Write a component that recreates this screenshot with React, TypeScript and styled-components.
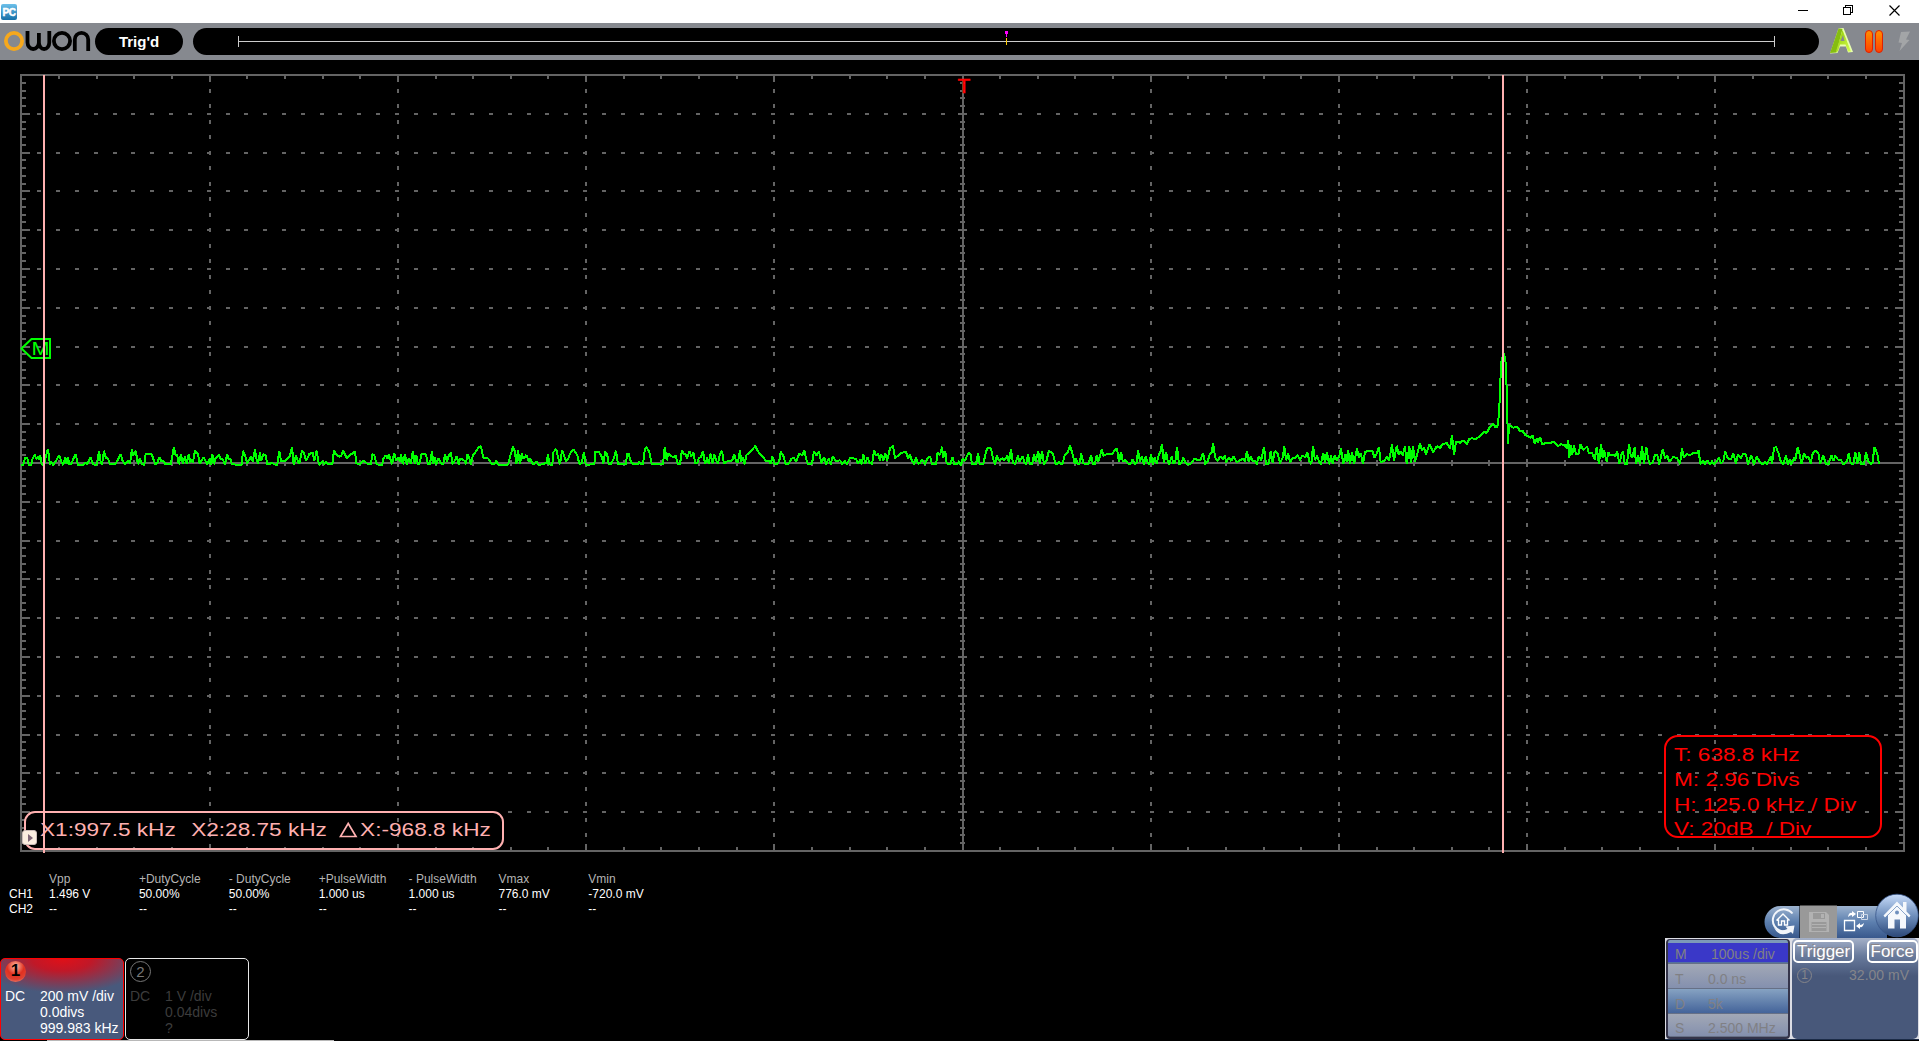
import React from "react";
import styled, { createGlobalStyle } from "styled-components";

const GlobalStyle = createGlobalStyle`
  * { box-sizing: border-box; }
  body {
    margin: 0;
    background: #000;
    font-family: "Liberation Sans", Arial, sans-serif;
    overflow: hidden;
  }
`;

// plot frame, as the centres of its 2px border lines
const LEFT = 21;
const TOP = 75;
const WIDTH = 1883;
const HEIGHT = 776;
const COLS = 10;
const ROWS = 20;
const FLOOR = 465;
const GRID = "#646464";
const CURSOR = "#ffb0b0";

// spectrum samples: start of the chunk in px, then "x,level" pairs in thirds of a px
const spectrum: [number, string][] = [
  [
    0,
    "63,0 70,0 75,22 82,20 86,0 94,0 98,20 105,33 108,18 114,26 117,16 120,31 125,2 132,0 137,25 144,48 150,0 154,10 160,0 168,12 178,30 184,10 190,0 196,22 200,5 204,24 208,2 214,2 220,18 227,32 234,0 250,0 257,8 262,2 271,24 280,2 291,0 297,42 302,8 306,2 312,43 318,20 324,20 330,2 346,2 354,16 362,32 368,12 376,2 384,12 390,4 396,48 400,28 407,43 414,2 419,20 426,3 433,0 437,33 455,33 460,18 466,2 472,5 478,24 484,12 491,12 496,2 512,2 517,28 522,54 527,28 531,32 536,2 543,32 548,5 555,26 560,3 566,33 571,8 575,18 579,8 585,43 594,33 599,4 604,12 611,24 617,10 622,2 629,20 632,0 637,34 641,2 646,18 657,32 662,18 668,18 675,0 681,33 686,18 691,18 696,2 725,0 729,43 735,30 741,5 748,15 753,26 758,10 765,48 769,20 774,4 780,38 784,12 790,32 797,30 802,2 810,4 817,6 822,2 832,0 838,43 843,12 854,12 864,22 870,28 876,54 881,0 888,30 893,12 898,3 906,43 912,35 918,12 924,24 928,33 938,38 943,12 950,43 957,0 963,5 968,12 973,2 978,10 984,2 997,2 1002,43 1008,33 1018,25 1024,28 1030,43 1040,20 1050,30 1065,40 1069,5 1078,2 1088,12 1096,10 1103,2 1113,2 1117,32 1123,30 1130,2 1146,0 1150,18 1157,30 1163,18 1166,32 1170,22 1176,2 1182,36 1189,14 1194,24 1199,10 1203,33 1208,2 1215,32 1220,2 1226,20 1232,4 1239,43 1244,4 1249,30 1254,2 1257,2 1260,10 1264,32 1278,32 1284,2 1290,3 1296,43 1300,2 1305,24 1308,0 1315,20 1323,5 1330,2 1335,32 1341,10 1347,30 1353,38 1357,3 1362,8 1370,26 1376,2 1381,20 1395,12 1398,2 1402,32 1407,25 1413,0 1418,28 1425,36 1436,54",
  ],
  [
    480,
    "3,57 10,22 24,20 36,2 43,2 49,14 54,1 84,1 90,25 99,55 105,40 109,2 114,44 120,2 125,34 130,18 139,30 147,10 151,20 158,2 164,5 170,10 176,1 190,2 196,8 200,5 204,34 208,2 217,0 220,38 229,48 236,14 240,2 246,44 252,30 258,10 264,18 272,38 281,46 292,30 298,3 305,5 312,40 317,1 343,2 346,40 356,40 364,28 370,5 376,40 382,30 386,2 392,3 402,20 408,43 414,3 430,4 438,2 441,34 446,34 453,8 460,2 474,3 478,10 483,2 489,2 494,44 499,54 508,40 515,2 540,2 549,2 554,55 560,14 565,34 575,26 581,22 587,30 593,3 600,3 606,44 612,34 617,32 621,20 629,42 634,25 640,38 646,5 652,5 656,20 663,24 669,42 675,4 682,22 686,2 691,34 698,5 703,32 710,10 714,3 720,34 726,42 732,4 738,10 748,12 757,14 763,32 769,10 774,8 780,44 784,10 788,22 794,2 799,30 810,38 826,57 838,34 848,25 858,12 868,12 872,3 877,25 884,2 892,4 898,12 902,40 910,28 917,3 925,2 934,18 941,22 948,10 958,34 967,30 973,44 978,20 984,2 996,4 1002,42 1010,28 1017,42 1024,5 1032,24 1039,2 1046,20 1052,2 1058,25 1068,12 1080,14 1086,3 1094,12 1101,2 1110,22 1118,20 1128,18 1134,3 1140,16 1145,2 1150,32 1156,5 1163,24 1168,8 1176,2 1182,44 1188,28 1194,34 1200,14 1204,32 1210,14 1216,36 1222,14 1230,50 1239,58 1245,20 1254,28 1264,36 1278,40 1284,20 1290,32 1296,12 1303,2 1308,24 1314,3 1319,5 1326,18 1334,2 1342,18 1350,26 1356,2 1368,2 1373,38 1380,30 1386,55 1390,22 1396,42 1400,5 1406,2 1411,2 1418,24 1423,2 1432,4 1438,12",
  ],
  [
    940,
    "60,2 64,0 68,20 76,12 80,25 86,36 92,30 96,2 108,2 114,36 119,2 130,2 138,40 142,50 153,50 159,20 165,2 170,28 178,12 186,20 193,15 202,28 207,8 213,48 219,5 226,3 234,28 238,10 248,26 254,5 258,2 264,32 270,2 276,2 282,32 287,10 295,42 299,3 306,42 312,2 320,14 326,42 338,36 346,5 352,2 358,10 363,2 368,4 374,30 384,40 390,58 397,36 404,5 408,20 413,2 418,2 424,34 430,5 438,3 446,4 453,30 459,3 465,3 470,30 475,10 480,28 486,48 490,28 500,32 510,34 516,32 522,42 531,50 537,8 543,40 548,12 556,14 566,2 572,3 578,18 584,2 590,8 594,44 600,10 605,26 612,2 617,26 622,10 628,2 633,32 638,2 644,22 650,5 656,30 662,42 666,64 672,5 678,40 684,8 688,2 695,26 700,5 706,10 711,54 717,2 724,6 730,22 736,8 745,1 754,5 764,20 774,14 782,16 789,36 796,2 803,12 810,34 816,38 819,66 826,22 834,12 840,26 848,18 854,28 859,8 866,22 874,12 880,26 890,8 900,14 910,20 914,10 921,42 926,10 932,26 938,10 944,14 950,2 956,26 964,14 972,54 978,3 986,3 992,42 998,5 1004,42 1014,32 1020,5 1028,22 1033,58 1038,14 1044,36 1050,8 1058,22 1066,20 1073,30 1080,14 1086,28 1096,24 1102,38 1108,12 1114,3 1119,58 1125,14 1131,28 1137,10 1142,2 1150,36 1155,5 1161,40 1167,2 1173,28 1178,3 1184,30 1190,14 1198,26 1203,50 1210,2 1216,32 1220,10 1224,46 1230,3 1236,40 1242,2 1251,50 1257,22 1262,36 1269,2 1275,38 1282,42 1298,42 1303,22 1310,34 1317,54 1322,8 1334,14 1341,26 1347,12 1356,62 1362,12 1370,58 1376,30 1382,42 1388,28 1395,56 1400,2 1408,56 1413,5 1419,58 1425,10 1432,34 1440,64 1446,44 1452,54 1458,32 1468,62 1480,38 1490,56 1498,54",
  ],
  [
    1400,
    "120,50 126,62 140,66 150,50 156,90 162,30 168,70 176,70 180,66 190,74 200,62 208,78 216,80 228,78 236,84 252,100 260,96 268,112 280,124 286,114 292,114 297,150 300,220 303,300 306,320 312,336 318,300 320,220 324,64 327,120 332,118 340,112 352,114 360,102 368,102 376,90 384,86 392,82 398,88 404,64 410,80 414,68 420,84 427,62 438,66 450,66 462,70 474,56 482,62 494,60 500,50 505,74 508,22 512,60 516,30 522,58 528,32 536,34 541,62 549,46 556,50 561,56 566,36 576,36 584,16 590,54 597,2 603,64 608,20 612,44 620,10 625,38 632,28 640,32 646,26 652,40 658,2 664,30 669,40 674,4 681,2 687,62 692,30 697,22 704,54 708,2 714,30 720,2 726,56 732,4 739,54 745,16 750,2 758,8 765,30 772,30 778,2 788,48 795,20 802,28 808,10 820,24 832,20 840,2 846,50 852,22 860,32 870,30 880,36 890,36 896,44 901,2 910,12 914,2 922,14 930,2 936,12 942,2 950,12 957,22 963,4 970,12 976,42 982,22 992,16 1000,34 1008,4 1014,32 1022,20 1030,34 1038,32 1044,2 1054,30 1062,2 1070,26 1080,8 1088,2 1094,10 1100,2 1108,16 1112,26 1116,4 1122,50 1128,54 1136,34 1143,8 1150,2 1158,30 1163,2 1170,16 1174,2 1182,22 1186,14 1193,54 1200,26 1205,2 1212,36 1218,22 1226,24 1232,5 1238,34 1248,44 1256,32 1260,3 1270,28 1278,3 1286,2 1294,30 1300,12 1306,28 1314,16 1322,16 1330,2 1342,14 1346,36 1352,6 1360,2 1366,40 1372,2 1378,38 1383,2 1392,2 1398,38 1405,10 1413,2 1418,8 1423,54 1432,34 1437,2",
  ],
];

const tracePoints = spectrum
  .flatMap(([start, chunk]) =>
    chunk.split(" ").map((pair) => {
      const [x, level] = pair.split(",").map(Number);
      return `${(start + x / 3).toFixed(1)},${(FLOOR - level / 3).toFixed(1)}`;
    })
  )
  .join(" ");

const range = (n: number) => Array.from({ length: n }, (_, i) => i);

// rectangles of the graticule as path commands
const box = (x: number, y: number, w: number, h: number) => `M${x} ${y}h${w}v${h}h${-w}z`;

const gridPath = (() => {
  const right = LEFT + WIDTH;
  const bottom = TOP + HEIGHT;
  const midX = 963;
  const midY = 463;
  const column = (n: number, per: number) => LEFT + 0.5 + (n * (WIDTH - 1)) / (COLS * per);
  let d = "";
  d += box(LEFT - 1, TOP - 1, WIDTH + 2, 2) + box(LEFT - 1, bottom - 1, WIDTH + 2, 2);
  d += box(LEFT - 1, TOP, 2, HEIGHT) + box(right - 1, TOP, 2, HEIGHT);
  d += box(midX - 1, TOP, 2, HEIGHT) + box(LEFT, midY - 1, WIDTH, 2);

  range(COLS * 5 - 1).forEach((i) => {
    const x = Math.round(column(i + 1, 5));
    const major = (i + 1) % 5 === 0;
    d += box(x - 1, TOP, 2, major ? 7 : 4) + box(x - 1, bottom - (major ? 7 : 4), 2, major ? 7 : 4);
    d += box(x - 1, midY - (major ? 4 : 3), 2, major ? 8 : 6);
  });
  range(ROWS * 5 - 1).forEach((i) => {
    const y = Math.round(TOP + ((i + 1) * HEIGHT) / (ROWS * 5));
    const len = (i + 1) % 5 === 0 ? 9 : 5;
    d += box(LEFT, y - 1, len, 2) + box(right - len, y - 1, len, 2);
    d += box(midX - (len === 9 ? 5 : 3), y - 1, len === 9 ? 9 : 5, 2);
  });
  // dotted division lines
  range(ROWS - 1).forEach((r) => {
    if (r === ROWS / 2 - 1) return;
    const y = Math.round(TOP + ((r + 1) * HEIGHT) / ROWS);
    range(COLS * 10 - 1).forEach((i) => {
      const shift = i < 50 ? 1 : 0;
      d += box(Math.round(column(i + 1, 10)) - 2 - shift + (i < 50 ? 0 : 1), y - 1, 4, 2);
    });
  });
  range(COLS - 1).forEach((c) => {
    if (c === COLS / 2 - 1) return;
    const x = Math.round(column(c + 1, 1));
    range(49).forEach((i) => {
      d += box(x - 1, Math.round(TOP + ((i + 1) * HEIGHT) / 50) - 2, 2, 4);
    });
  });
  return d;
})();

const measures = [
  { name: "Vpp", ch1: "1.496 V" },
  { name: "+DutyCycle", ch1: "50.00%" },
  { name: "- DutyCycle", ch1: "50.00%" },
  { name: "+PulseWidth", ch1: "1.000 us" },
  { name: "- PulseWidth", ch1: "1.000 us" },
  { name: "Vmax", ch1: "776.0 mV" },
  { name: "Vmin", ch1: "-720.0 mV" },
];

const timebase = [
  { label: "M", value: "100us /div", kind: "active" },
  { label: "T", value: "0.0 ns", kind: "grey" },
  { label: "D", value: "5k", kind: "blue" },
  { label: "S", value: "2.500 MHz", kind: "grey" },
];

const Logo = () => (
  <svg width="95" height="37" viewBox="0 23 95 37" fill="none" stroke="#000" strokeWidth="3.8">
    <circle cx="14" cy="41" r="8.1" stroke="#f6a81c" strokeWidth="3.8" />
    <path d="M27.5 31v11.500a5.700 6.500 0 0 0 11.400 0V33 M38.900 42.500a5.200 6.500 0 0 0 10.400 0V31" />
    <circle cx="62" cy="41" r="8.100" />
    <path d="M74.800 51V39.500a6.600 6.600 0 0 1 13.400 0V51" />
  </svg>
);

const PlotArea = () => (
  <svg width="1919" height="810" viewBox="0 60 1919 810">
    <path d={gridPath} fill={GRID} shapeRendering="crispEdges" />
    <text x="957.600" y="93" fontSize="21" fill="#f00" stroke="#f00" strokeWidth=".4">T</text>
    <polyline
      points={tracePoints}
      fill="none"
      stroke="#0f0"
      strokeWidth="2"
      strokeLinejoin="bevel"
      shapeRendering="crispEdges"
    />
    <path d="M21.500 348.500L31.500 339H50v19H31.500z" fill="none" stroke="#0f0" strokeWidth="2" />
    <text x="31.500" y="355.300" fontSize="19" fill="#0f0" textLength="18" lengthAdjust="spacingAndGlyphs">M</text>
    <path d={box(43, 75, 2, 778) + box(1502, 75, 2, 778)} fill={CURSOR} shapeRendering="crispEdges" />
  </svg>
);

const App: React.FC = () => {
  return (
    <Window>
      <GlobalStyle />
      <TitleBar>
        <AppIcon>PC</AppIcon>
        <svg width="121" height="23" viewBox="1798 0 121 23" fill="none" stroke="#000" shapeRendering="crispEdges">
          <path d="M1798 10.500h10" />
          <path d="M1843.500 7.500h7v7h-7z M1845.500 7v-1.500h7v7h-2" />
          <path d="M1889.500 5.500l10 10m0-10l-10 10" shapeRendering="auto" strokeWidth="1.200" />
        </svg>
      </TitleBar>
      <StatusBar>
        <Logo />
        <Pill $width={88}>Trig'd</Pill>
        <Pill $width={1626}>
          <svg width="1626" height="27" viewBox="193 28 1626 27" shapeRendering="crispEdges">
            <path d="M238 41h1537v1H238z M238 36h1v11h-1z M1774 36h1v11h-1z" fill="#ccc" />
            <path d="M1005 31h3v3h-1v3h-1v-3h-1z" fill="#f0f" />
            <path d="M1006 38h1v7h-1z" fill="#fc0" />
          </svg>
        </Pill>
        <StatusIcons />
      </StatusBar>
      <Scope>
        <PlotArea />
        <CursorReadout>
          <Stretched>
            <CursorRow>
              <span>X1:997.5 kHz</span>
              <span>X2:28.75 kHz</span>
              <svg width="18" height="20">
                <path d="M1.500 16.500L8 3.500L14.500 16.500z" fill="none" stroke={CURSOR} strokeWidth="1.600" />
              </svg>
              <span>X:-968.8 kHz</span>
            </CursorRow>
          </Stretched>
        </CursorReadout>
        <Expander>
          <svg width="7" height="8"><path d="M1 0l5 4-5 4z" fill="#806878" /></svg>
        </Expander>
        <FftReadout>
          <Stretched>
            <FftLine>T: 638.8 kHz</FftLine>
            <FftLine>M: 2.96 Divs</FftLine>
            <FftLine>H: 125.0 kHz / Div</FftLine>
            <FftLine>V: 20dB{"  "}/ Div</FftLine>
          </Stretched>
        </FftReadout>
      </Scope>
      <Footer>
        <div>
          <Measures>
            <MeasureColumn>
              <span>&nbsp;</span>
              <span>CH1</span>
              <span>CH2</span>
            </MeasureColumn>
            {measures.map(({ name, ch1 }) => (
              <MeasureColumn key={name}>
                <MeasureName>{name}</MeasureName>
                <span>{ch1}</span>
                <span>--</span>
              </MeasureColumn>
            ))}
          </Measures>
          <Channels>
            <Channel $on>
              <Badge $on>1</Badge>
              <span>DC</span>
              <ChannelValues>200 mV /div{"\n"}0.0divs{"\n"}999.983 kHz</ChannelValues>
            </Channel>
            <Channel>
              <Badge>2</Badge>
              <span>DC</span>
              <ChannelValues>1 V /div{"\n"}0.04divs{"\n"}?</ChannelValues>
            </Channel>
          </Channels>
          <TaskLine />
        </div>
        <Controls>
          <Tools />
          <Panels>
            <Timebase>
              {timebase.map(({ label, value, kind }) => (
                <TimeRow key={label} $kind={kind}>
                  <span>{label}</span>
                  <span>{value}</span>
                </TimeRow>
              ))}
            </Timebase>
            <TriggerPanel>
              <TriggerButtons>
                <TriggerButton>Trigger</TriggerButton>
                <TriggerButton>Force</TriggerButton>
              </TriggerButtons>
              <TriggerLevel>
                <Source>1</Source>
                <span>32.00 mV</span>
              </TriggerLevel>
            </TriggerPanel>
          </Panels>
        </Controls>
      </Footer>
    </Window>
  );
};

const StatusIcons = () => (
  <svg width="100" height="37" viewBox="1819 23 100 37">
    <defs>
      <linearGradient id="pause" x1="0" y1="0" x2="0" y2="1">
        <stop offset="0" stopColor="#ff9000" />
        <stop offset="1" stopColor="#ff4000" />
      </linearGradient>
      <linearGradient id="auto" x1="0" y1="0" x2="1" y2="1">
        <stop offset="0" stopColor="#8cc800" />
        <stop offset="1" stopColor="#d8ff50" />
      </linearGradient>
    </defs>
    <path d="M1838.500 28.500l5-.5 9.500 24-5 .5-2-6h-6l-2.500 6.500-7.500.5z" fill="#e8ffb0" />
    <path d="M1838.500 28.500l4 .5-6 23.500-6.500.5z" fill="#86bd10" />
    <path d="M1842.500 30l8.500 21.500h-3l-2.500-7h-5.500l-2 7h-2z" fill="url(#auto)" />
    <path d="M1843 35l1.500 6h-4z" fill="#86898f" />
    <rect x="1865.500" y="30.500" width="7" height="22" rx="3.500" fill="url(#pause)" stroke="#e02000" />
    <rect x="1875.500" y="30.500" width="7" height="22" rx="3.500" fill="url(#pause)" stroke="#e02000" />
    <path d="M1901 32l9-.5-4 8 3.500.5-10 11 2.500-8-3.500-.5z" fill="#a3a5a7" />
  </svg>
);

const Tools = () => (
  <svg width="156" height="46" viewBox="1763 892 156 46">
    <defs>
      <linearGradient id="tool" x1="0" y1="0" x2="0" y2="1">
        <stop offset="0" stopColor="#9db3cf" />
        <stop offset=".5" stopColor="#5d80af" />
        <stop offset="1" stopColor="#38588c" />
      </linearGradient>
      <linearGradient id="home" x1="0" y1="0" x2="0" y2="1">
        <stop offset="0" stopColor="#c8dcfa" />
        <stop offset=".5" stopColor="#7090bd" />
        <stop offset="1" stopColor="#2c4878" />
      </linearGradient>
    </defs>
    <path d="M1799.500 906h-19a16 16 0 0 0 0 32h19z M1837 906h50v32h-50z" fill="url(#tool)" />
    <path d="M1800 905.500h37V938h-37z" fill="#999" />

    {/* back to home: open ring ending in an arrow head */}
    <path d="M1792.500 913.500A11 11 0 1 0 1789 930" fill="none" stroke="#f2f5fa" strokeWidth="2" />
    <path d="M1773 925q4 9 14.500 4l-2-2.500 9-1-1.500 8.500-2-2q-13 7-18-7z" fill="#f2f5fa" />
    <path d="M1776.500 920.500l6.500-6.500 6.500 6.500 M1778.500 919.500v5.500h3v-4h3v4h3v-5.500" fill="none" stroke="#fff" strokeWidth="1.400" />

    {/* save, disabled */}
    <path d="M1809 912h17l3 3v17h-20z" fill="#b2b2b2" />
    <path d="M1813 913h12v6h-12z M1811.500 922h15v9h-15z" fill="#999" />
    <path d="M1821 914h3v4h-3z M1812 924h14v1h-14z M1812 927h14v1h-14z" fill="#b2b2b2" />

    {/* swap windows */}
    <g fill="none" stroke="#fff">
      <path d="M1844.500 920.500h10v10h-10z" strokeWidth="1.300" />
      <path d="M1857.500 911.500h6v6h-6z" />
      <path d="M1861.500 914.500h6v5h-6z" stroke="#cbd6e6" />
    </g>
    <path d="M1848 917q1-5 4-4v-2l4 3-4 3v-2q-2 0-4 2z M1864 923q-1 5-4 4v2l-4-3 4-3v2q2 0 4-2z" fill="#fff" />

    <circle cx="1897" cy="915.500" r="21.300" fill="url(#home)" stroke="#39578a" strokeWidth=".8" />
    <path d="M1883.500 915.500l13.500-14 6 6v-5.500h3.500v9.500l4 4-1.500 2-3-3v14h-6v-9h-5.500v9h-6.500v-14l-3 3z" fill="#f5f8fc" />
    <path d="M1885 916l12-12 12 12" fill="none" stroke="#6f8fbd" strokeWidth=".8" transform="translate(0 2)" />
    <circle cx="1897" cy="912.500" r="2" fill="#6f8fbd" />
  </svg>
);

const Window = styled.div`
  width: 1919px;
  height: 1041px;
  display: flex;
  flex-direction: column;
  background: #000;
  overflow: hidden;

  svg {
    display: block;
    flex: none;
  }
`;

const TitleBar = styled.header`
  height: 23px;
  display: flex;
  justify-content: space-between;
  align-items: center;
  background: #fff;
  flex: none;
`;

const AppIcon = styled.div`
  width: 16px;
  height: 16px;
  margin-left: 1px;
  border-radius: 2px;
  background: linear-gradient(#6cc0ea, #1670a8);
  color: #fff;
  font-size: 10px;
  font-weight: bold;
  line-height: 17px;
  text-align: center;
  letter-spacing: -0.5px;
  -webkit-text-stroke: 0.5px #fff;
`;

const StatusBar = styled.div`
  height: 37px;
  display: flex;
  align-items: center;
  background: #86898f;
  flex: none;
`;

const Pill = styled.div<{ $width: number }>`
  width: ${(p) => p.$width}px;
  height: 27px;
  margin-right: ${(p) => (p.$width < 100 ? 10 : 0)}px;
  display: flex;
  align-items: center;
  justify-content: center;
  border-radius: 14px;
  background: #000;
  color: #fff;
  font-size: 15px;
  font-weight: bold;
  flex: none;
`;

const Scope = styled.main`
  position: relative;
  height: 810px;
  flex: none;
`;

const Stretched = styled.div`
  transform: scaleX(1.19);
  transform-origin: 0 0;
  font-size: 19px;
  white-space: pre;
`;

const CursorReadout = styled.div`
  position: absolute;
  left: 24px;
  top: 751px;
  width: 480px;
  height: 39px;
  padding: 7px 0 0 14px;
  border: 2px solid ${CURSOR};
  border-radius: 11px;
  color: ${CURSOR};
`;

const CursorRow = styled.div`
  display: grid;
  grid-template-columns: 127px 124px 18px auto;
  justify-content: start;
  line-height: 20px;
`;

const Expander = styled.button`
  position: absolute;
  left: 22px;
  top: 770px;
  width: 15px;
  height: 15px;
  padding: 0 0 0 2px;
  display: grid;
  place-items: center;
  border: 1px solid #cbbcb8;
  border-radius: 3px;
  background: #fbeee0;
`;

const FftReadout = styled.div`
  position: absolute;
  left: 1664px;
  top: 675px;
  width: 218px;
  height: 103px;
  padding: 7px 0 0 8px;
  border: 2px solid #f00;
  border-radius: 14px;
  color: #f00;
`;

const FftLine = styled.div`
  height: 25px;
  line-height: 22px;

  &:last-child {
    margin-top: -1px;
  }
`;

const Footer = styled.footer`
  display: flex;
  justify-content: space-between;
  align-items: flex-end;
  height: 171px;
`;

const Measures = styled.div`
  display: grid;
  grid-template-columns: 40px repeat(7, 89.900px);
  padding-left: 9px;
  margin-bottom: 41px;
`;

const MeasureColumn = styled.div`
  display: flex;
  flex-direction: column;
  color: #fff;
  font-size: 12px;
  line-height: 15px;
  white-space: nowrap;
`;

const MeasureName = styled.span`
  color: #b4b4b4;
`;

const Channels = styled.div`
  display: flex;
  gap: 1px;
`;

const Channel = styled.section<{ $on?: boolean }>`
  width: 124px;
  height: 82px;
  padding: 2px 0 0 4px;
  display: grid;
  grid-template-columns: 35px 1fr;
  grid-template-rows: 27px 1fr;
  border: 1px solid ${(p) => (p.$on ? "#f00" : "#e8e8e8")};
  border-radius: 5px;
  background: ${(p) =>
    p.$on ? "radial-gradient(ellipse 85px 34px at 50% 0, #e01018 0, #c01828 35%, #48597c 100%) #48597c" : "#000"};
  color: ${(p) => (p.$on ? "#fff" : "#3c3c3c")};
  font-size: 14px;
  line-height: 16px;
`;

const Badge = styled.div<{ $on?: boolean }>`
  grid-column: 1 / -1;
  width: 21px;
  height: 21px;
  border-radius: 50%;
  border: ${(p) => (p.$on ? "none" : "1px solid #777")};
  background: ${(p) => (p.$on ? "radial-gradient(circle at 50% 25%, #ffc0a8, #e03020 45%, #e04030 70%, #f0a898)" : "none")};
  color: ${(p) => (p.$on ? "#000" : "#777")};
  font-size: ${(p) => (p.$on ? 17 : 15)}px;
  font-weight: ${(p) => (p.$on ? "bold" : "normal")};
  line-height: 20px;
  text-align: center;
`;

const ChannelValues = styled.div`
  white-space: pre;
`;

const TaskLine = styled.div`
  width: 287px;
  height: 1px;
  margin-left: 47px;
  background: #b8b8b8;
`;

const Controls = styled.div`
  display: flex;
  flex-direction: column;
  align-items: flex-end;
`;

const Panels = styled.div`
  display: flex;
  width: 254px;
  height: 102px;
  padding-right: 1px;
  background: #dcdde4;
  border-bottom: 1px solid #1c2c48;
  margin-bottom: 1px;
`;

const Timebase = styled.div`
  width: 124px;
  margin: 1px 2px 0 1px;
  display: grid;
  grid-template-rows: 24px 25px 25px 1fr;
  border: 2px solid #34344a;
  border-top-width: 1px;
  border-radius: 4px;
  background: #34344a;
  overflow: hidden;
`;

const rowFill: Record<string, string> = {
  active: "linear-gradient(#7d99b8 0 3px, #3a38c8 3px 22px, #5470a0 22px)",
  grey: "linear-gradient(#a2a8b6, #8490ae)",
  blue: "linear-gradient(#86a2c2, #44649a)",
};

const TimeRow = styled.div<{ $kind: string }>`
  display: grid;
  grid-template-columns: ${(p) => (p.$kind === "active" ? 36 : 33)}px 1fr;
  padding: ${(p) => (p.$kind === "active" ? 6 : 7)}px 0 0 7px;
  border-bottom: 1px solid #667086;
  background: ${(p) => rowFill[p.$kind]};
  color: #808084;
  font-size: 14px;
  line-height: 16px;

  &:last-child {
    padding-top: 6px;
  }
`;

const TriggerPanel = styled.div`
  flex: 1;
  padding: 2px 0 2px 1px;
  border-radius: 5px;
  background: linear-gradient(#a4b0c8 0, #687a9c 18px, #48587a 38px);
`;

const TriggerButtons = styled.div`
  display: flex;
  justify-content: space-between;
`;

const TriggerButton = styled.button`
  height: 23px;
  padding: 0 2px;
  border: 2px solid #fff;
  border-radius: 5px;
  background: transparent;
  color: #fff;
  font-family: inherit;
  font-size: 17px;
  line-height: 19px;
  text-shadow: -1px -1px 0 #8a8488;
`;

const TriggerLevel = styled.div`
  display: flex;
  justify-content: space-between;
  align-items: center;
  padding: 4px 9px 0 4px;
  color: #85858a;
  font-size: 14px;
`;

const Source = styled.span`
  width: 15px;
  height: 15px;
  border: 1px solid #85858a;
  border-radius: 50%;
  font-size: 12px;
  line-height: 13px;
  text-align: center;
`;

export default App;
